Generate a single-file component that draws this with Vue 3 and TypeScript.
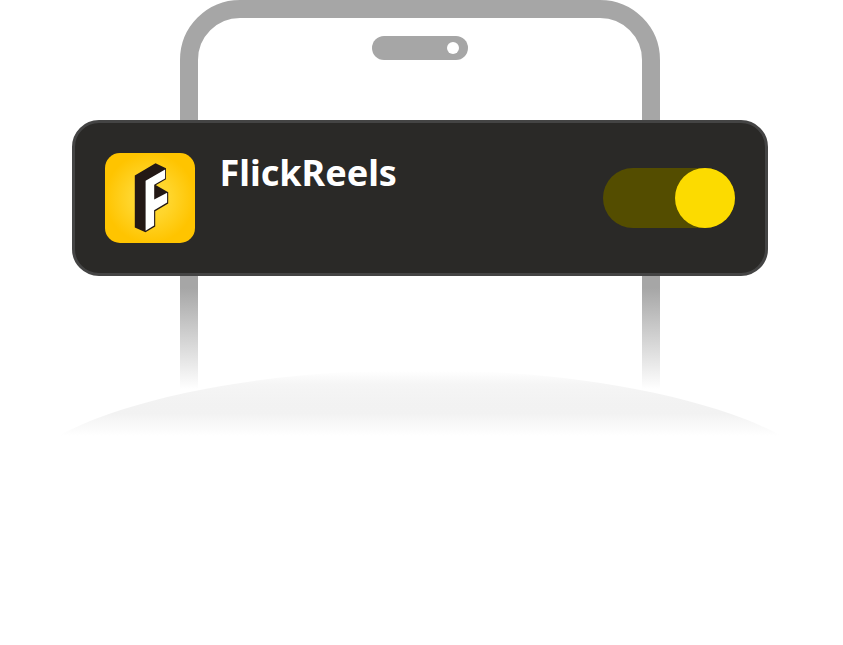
<script setup lang="ts">
const appName: string = 'FlickReels'
const enabled: boolean = true
</script>

<template>
  <main class="scene">
    <svg class="backdrop" viewBox="0 0 843 645" aria-hidden="true">
      <defs>
        <linearGradient id="frame" gradientUnits="userSpaceOnUse" x1="0" y1="0" x2="0" y2="389">
          <stop offset="0" stop-color="#a6a6a6" />
          <stop offset="0.74" stop-color="#a6a6a6" />
          <stop offset="1" stop-color="#a6a6a6" stop-opacity="0" />
        </linearGradient>
        <linearGradient id="ground" gradientUnits="userSpaceOnUse" x1="0" y1="371" x2="0" y2="436">
          <stop offset="0" stop-color="#f1f1f1" stop-opacity="0" />
          <stop offset="0.2" stop-color="#f1f1f1" stop-opacity="0.7" />
          <stop offset="0.5" stop-color="#f1f1f1" stop-opacity="0.92" />
          <stop offset="0.65" stop-color="#f1f1f1" stop-opacity="0.92" />
          <stop offset="1" stop-color="#f1f1f1" stop-opacity="0" />
        </linearGradient>
      </defs>
      <path d="M189 390V60A51 51 0 0 1 240 9H600A51 51 0 0 1 651 60V390" fill="none" stroke="url(#frame)" stroke-width="18" />
      <rect x="372" y="36" width="96" height="24" rx="12" fill="#a6a6a6" />
      <circle cx="453" cy="48" r="6" fill="#fff" />
      <ellipse cx="420" cy="505" rx="421" ry="135" fill="url(#ground)" />
    </svg>
    <section class="card">
      <svg class="logo" viewBox="0 0 90 90" aria-hidden="true">
        <defs>
          <radialGradient id="gold">
            <stop offset="0" stop-color="#ffdc3c" />
            <stop offset="0.45" stop-color="#ffd52b" />
            <stop offset="1" stop-color="#ffc400" />
          </radialGradient>
        </defs>
        <rect width="90" height="90" rx="15" fill="url(#gold)" />
        <path d="M29.8 22.5L50.5 10.2L61 15.2V26.3L50.2 32.6V31.8L63.2 39.3V50.4L50.2 58.2V73.4L40.5 79.2L29.8 74.5Z" fill="#231815" />
        <path d="M40.6 27.7L60.1 16.4V25.4L49.2 31.8V46.6L62.1 39.8V49.5L49.1 57.2V72.5L40.6 77.8Z" fill="#fff" />
      </svg>
      <h1 class="name">{{ appName }}</h1>
      <button class="toggle" type="button" role="switch" :aria-checked="enabled" :aria-label="appName">
        <span class="knob"></span>
      </button>
    </section>
  </main>
</template>

<style scoped>
.scene {
  position: relative;
  box-sizing: border-box;
  width: 843px;
  height: 645px;
  padding: 120px 75px 0 72px;
  overflow: hidden;
  background: #fff;
}
.backdrop {
  position: absolute;
  inset: 0;
  width: 843px;
  height: 645px;
}
.card {
  position: relative;
  display: flex;
  align-items: center;
  box-sizing: border-box;
  height: 156px;
  padding: 0 30px;
  border: 3px solid #444;
  border-radius: 27px;
  background: #2a2927;
}
.logo {
  width: 90px;
  height: 90px;
}
.name {
  align-self: flex-start;
  margin: 25px 0 0 24.4px;
  color: #fff;
  font: 700 36px/50px "Noto Sans", sans-serif;
}
.toggle {
  display: flex;
  justify-content: flex-end;
  width: 132px;
  height: 60px;
  margin: 0 0 0 auto;
  padding: 0;
  border: 0;
  border-radius: 30px;
  background: #544d00;
}
.knob {
  width: 60px;
  height: 60px;
  border-radius: 50%;
  background: #fcdb00;
}
</style>
